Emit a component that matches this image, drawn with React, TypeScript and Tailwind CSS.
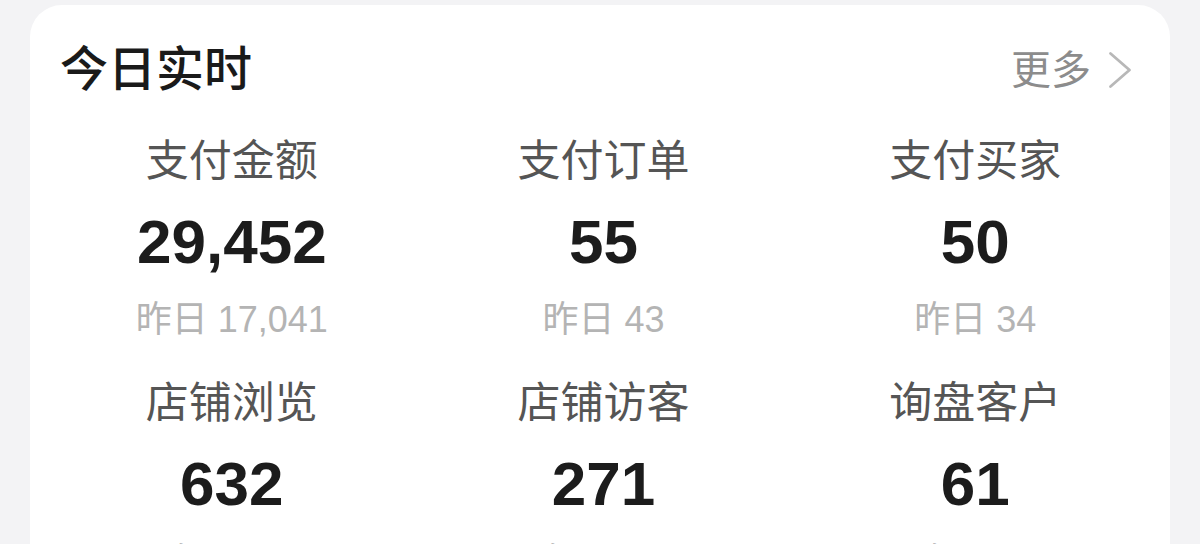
const stats = [
  { label: '支付金额', value: '29,452', yesterday: '17,041' },
  { label: '支付订单', value: '55', yesterday: '43' },
  { label: '支付买家', value: '50', yesterday: '34' },
  { label: '店铺浏览', value: '632', yesterday: '518' },
  { label: '店铺访客', value: '271', yesterday: '196' },
  { label: '询盘客户', value: '61', yesterday: '47' },
]

function ChevronRight() {
  return (
    <svg width="24" height="38" viewBox="0 0 24 38" fill="none" className="ml-[17px]">
      <path d="M2.5 2.5 L21.5 19 L2.5 35.5" stroke="#b8b8b8" strokeWidth="2.8" strokeLinecap="round" strokeLinejoin="round" />
    </svg>
  )
}

function StatCell({ label, value, yesterday }: { label: string; value: string; yesterday: string }) {
  return (
    <div className="flex flex-col items-center">
      <div className="text-[43px] leading-[50px] text-[#555555]">{label}</div>
      <div className="mt-[16px] text-[62px] font-bold leading-[80px] text-[#1c1c1c]">{value}</div>
      <div className="mt-[18px] text-[36px] leading-[40px] text-[#b4b4b4]">
        昨日 {yesterday}
      </div>
    </div>
  )
}

function App() {
  return (
    <main
      className="h-screen overflow-hidden bg-[#f3f3f5] px-[30px] pt-[5px]"
      style={{ fontFamily: '"Liberation Sans", "Noto Sans CJK SC", sans-serif' }}
    >
      <section className="min-h-[700px] rounded-[32px] bg-white pt-[37px]">
        <header className="flex items-center justify-between pl-[30px] pr-[38px]">
          <h1 className="text-[48px] font-medium leading-[56px] text-[#1a1a1a]">今日实时</h1>
          <div className="flex items-center">
            <span className="text-[40px] leading-[48px] text-[#8c8c8c]">更多</span>
            <ChevronRight />
          </div>
        </header>

        <div className="mt-[38px] grid grid-cols-3 gap-y-[38px] pl-[16px] pr-[9px]">
          {stats.map((stat) => (
            <StatCell key={stat.label} {...stat} />
          ))}
        </div>
      </section>
    </main>
  )
}

export default App
